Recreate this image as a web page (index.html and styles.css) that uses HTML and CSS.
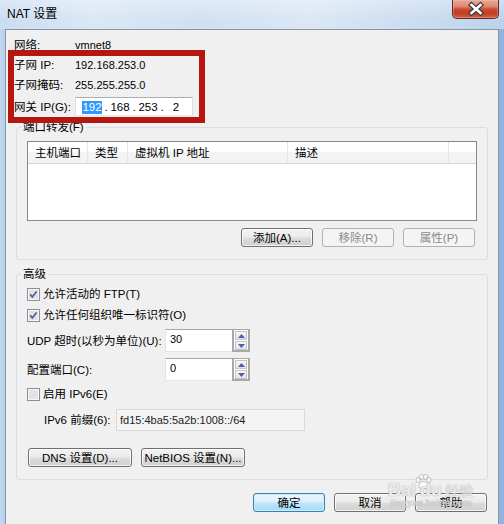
FILE: index.html
```html
<!DOCTYPE html>
<html lang="zh-CN">
<head>
<meta charset="utf-8">
<title>NAT 设置</title>
<link rel="stylesheet" href="styles.css">
</head>
<body>
<div class="window">
  <div class="titlebar">
    <span class="title">NAT 设置</span>
    <div class="close">
      <svg width="47" height="19" viewBox="0 0 47 19">
        <path d="M19.5 6 L28.5 14 M28.5 6 L19.5 14" stroke="#3b3b3b" stroke-width="5" stroke-linecap="square" fill="none"/>
        <path d="M19.5 6 L28.5 14 M28.5 6 L19.5 14" stroke="#ffffff" stroke-width="2.6" stroke-linecap="square" fill="none"/>
      </svg>
    </div>
  </div>
  <div class="client">
    <div class="info">
      <div class="irow"><span class="lbl">网络:</span><span class="val">vmnet8</span></div>
      <div class="irow"><span class="lbl">子网 IP:</span><span class="val">192.168.253.0</span></div>
      <div class="irow"><span class="lbl">子网掩码:</span><span class="val">255.255.255.0</span></div>
      <div class="irow ip-row">
        <span class="lbl">网关 IP(G):</span>
        <div class="ipbox">
          <span class="oct"><span class="sel">192</span></span><span class="dot">.</span><span class="oct">168</span><span class="dot">.</span><span class="oct">253</span><span class="dot">.</span><span class="oct">2</span>
        </div>
      </div>
    </div>

    <fieldset class="group g1">
      <legend>端口转发(F)</legend>
      <div class="gbody">
        <div class="listview">
          <div class="lv-head">
            <div class="col c1">主机端口</div>
            <div class="col c2">类型</div>
            <div class="col c3">虚拟机 IP 地址</div>
            <div class="col c4">描述</div>
            <div class="col c5"></div>
          </div>
        </div>
        <div class="btnrow">
          <button class="btn">添加(A)...</button>
          <button class="btn disabled">移除(R)</button>
          <button class="btn disabled">属性(P)</button>
        </div>
      </div>
    </fieldset>

    <fieldset class="group g2">
      <legend>高级</legend>
      <div class="gbody">
        <div class="cb r-cb1">
          <svg width="13" height="13" viewBox="0 0 13 13"><rect x="0.5" y="0.5" width="12" height="12" fill="#f6f6f6" stroke="#8e8f8f"/><rect x="2" y="2" width="9" height="9" fill="#dfe2e6"/><path d="M3.2 6.4 L5.3 8.9 L9.6 3.4" stroke="#4d5f92" stroke-width="1.7" fill="none"/></svg>
          <span>允许活动的 FTP(T)</span>
        </div>
        <div class="cb r-cb2">
          <svg width="13" height="13" viewBox="0 0 13 13"><rect x="0.5" y="0.5" width="12" height="12" fill="#f6f6f6" stroke="#8e8f8f"/><rect x="2" y="2" width="9" height="9" fill="#dfe2e6"/><path d="M3.2 6.4 L5.3 8.9 L9.6 3.4" stroke="#4d5f92" stroke-width="1.7" fill="none"/></svg>
          <span>允许任何组织唯一标识符(O)</span>
        </div>
        <div class="frow r-udp">
          <span class="flbl">UDP 超时(以秒为单位)(U):</span>
          <div class="spin">
            <span class="spin-val">30</span>
            <div class="spin-btns">
              <div class="spin-btn"><svg width="7" height="4" viewBox="0 0 7 4"><path d="M0 4 L3.5 0 L7 4 Z" fill="#4a5cb8"/></svg></div>
              <div class="spin-btn"><svg width="7" height="4" viewBox="0 0 7 4"><path d="M0 0 L3.5 4 L7 0 Z" fill="#4a5cb8"/></svg></div>
            </div>
          </div>
        </div>
        <div class="frow r-port">
          <span class="flbl">配置端口(C):</span>
          <div class="spin">
            <span class="spin-val">0</span>
            <div class="spin-btns">
              <div class="spin-btn"><svg width="7" height="4" viewBox="0 0 7 4"><path d="M0 4 L3.5 0 L7 4 Z" fill="#4a5cb8"/></svg></div>
              <div class="spin-btn"><svg width="7" height="4" viewBox="0 0 7 4"><path d="M0 0 L3.5 4 L7 0 Z" fill="#4a5cb8"/></svg></div>
            </div>
          </div>
        </div>
        <div class="cb r-ipv6">
          <svg width="13" height="13" viewBox="0 0 13 13"><rect x="0.5" y="0.5" width="12" height="12" fill="#f6f6f6" stroke="#8e8f8f"/><rect x="2" y="2" width="9" height="9" fill="#e1e3e6"/></svg>
          <span>启用 IPv6(E)</span>
        </div>
        <div class="frow r-prefix">
          <span class="plbl">IPv6 前缀(6):</span>
          <div class="pinput">fd15:4ba5:5a2b:1008::/64</div>
        </div>
        <div class="brow">
          <button class="btn wide">DNS 设置(D)...</button>
          <button class="btn wide">NetBIOS 设置(N)...</button>
        </div>
      </div>
    </fieldset>

    <div class="dlg-btns">
      <button class="btn default">确定</button>
      <button class="btn">取消</button>
      <button class="btn">帮助</button>
    </div>

    <div class="annot"></div>
    <div class="watermark">
      <div class="wm-logo"><span class="wm-bai">Bai</span><svg class="wm-paw" width="18" height="16" viewBox="0 0 18 16"><g fill="rgba(255,255,255,0.85)" stroke="#b0b0b0" stroke-width="0.8"><ellipse cx="4" cy="6" rx="2" ry="2.6"/><ellipse cx="7.5" cy="2.8" rx="2" ry="2.5"/><ellipse cx="11.5" cy="2.8" rx="2" ry="2.5"/><ellipse cx="15" cy="6" rx="2" ry="2.6"/><path d="M9.5 7.5 C6 7.5 4.5 11 5 13 C5.6 15 8 14.5 9.5 14.5 C11 14.5 13.4 15 14 13 C14.5 11 13 7.5 9.5 7.5 Z"/></g></svg><span class="wm-du">du</span><span class="wm-jy">经验</span></div>
      <div class="wm-url">jingyan.baidu.com</div>
    </div>
  </div>
</div>
</body>
</html>
```

FILE: styles.css
```css
html, body {
  margin: 0;
  padding: 0;
}
body {
  font-family: "Liberation Sans", "Noto Sans CJK SC", sans-serif;
  font-size: 11.5px;
  line-height: 14px;
  color: #000;
  background: #b8cfea;
}
.window {
  width: 504px;
  height: 524px;
  overflow: hidden;
  display: flex;
  flex-direction: column;
  background: linear-gradient(to right, #c3d8ef 0, #b7cfec 5px, #a9c6e6 60%, #92b4dc 100%);
}
.titlebar {
  height: 29px;
  flex: none;
  display: flex;
  justify-content: space-between;
  align-items: flex-start;
  background:
    linear-gradient(to bottom, rgba(255,255,255,0.35), rgba(255,255,255,0.05) 70%),
    linear-gradient(to right, #c8dbf0 0%, #d8e6f4 18%, #cfdff1 40%, #d9e6f4 62%, #c6d9ef 85%, #b9d0eb 100%);
}
.title {
  margin: 7px 0 0 7px;
  font-size: 12px;
  line-height: 14px;
  color: #000;
}
.close {
  width: 47px;
  height: 19px;
  margin-right: 5px;
  box-sizing: border-box;
  border: 1px solid #5f2a22;
  border-top: none;
  border-radius: 0 0 5px 5px;
  background: linear-gradient(#e6a996 0%, #dc8a73 35%, #c9492f 52%, #c23d22 75%, #d5634a 100%);
  box-shadow: inset 0 0 0 1px rgba(255,200,190,0.35);
}
.close svg {
  display: block;
  margin: -1px 0 0 -1px;
}
.client {
  margin: 0 5px;
  flex: 1;
  position: relative;
  background: #f0f0f0;
  border: 1px solid #8795a6;
  border-bottom: none;
  display: flex;
  flex-direction: column;
}

/* info block */
.info {
  padding: 5px 0 0 8px;
}
.irow {
  display: flex;
  align-items: center;
  height: 20px;
}
.lbl {
  width: 61px;
  flex: none;
}
.val {
  font-size: 11px;
}
.ip-row {
  margin-top: 2px;
  height: 19px;
}
.ipbox {
  box-sizing: border-box;
  width: 118px;
  height: 19px;
  background: #fff;
  border: 1px solid #dbdfe6;
  border-top-color: #abadb3;
  border-bottom-color: #e3e9ef;
  padding-left: 5px;
  display: flex;
  align-items: center;
  font-size: 11.5px;
}
.oct {
  width: 22px;
  text-align: center;
}
.dot {
  width: 6px;
  text-align: center;
}
.sel {
  background: #3399ff;
  color: #fff;
  display: inline-block;
  line-height: 13px;
}

/* groups */
.group {
  margin: 0 10px;
  padding: 0;
  min-width: 0;
  border: 1px solid #d5dfe5;
  border-radius: 3px;
}
.group legend {
  margin-left: 4px;
  padding: 0 2px;
  line-height: 14px;
}
.g1 {
  margin-top: 4px;
}
.g2 {
  margin-top: 7px;
}
.gbody {
  padding: 7px 10px 12px 10px;
}
.g2 .gbody {
  padding: 0 10px 12px 10px;
}
.listview {
  box-sizing: border-box;
  height: 80px;
  background: #fff;
  border: 1px solid #828790;
}
.lv-head {
  display: flex;
  height: 22px;
  box-sizing: border-box;
  border-bottom: 1px solid #d5d5d5;
  background: linear-gradient(#ffffff 0%, #ffffff 45%, #f3f4f6 46%, #f1f2f4 100%);
}
.col {
  box-sizing: border-box;
  padding-left: 7px;
  display: flex;
  align-items: center;
  border-right: 1px solid #e3e6ea;
}
.c1 { width: 60px; }
.c2 { width: 40px; }
.c3 { width: 160px; }
.c4 { width: 161px; }
.c5 { flex: 1; border-right: none; }
.btnrow {
  margin-top: 7px;
  padding-right: 2px;
  display: flex;
  justify-content: flex-end;
  gap: 9px;
}

/* buttons */
.btn {
  box-sizing: border-box;
  width: 72px;
  height: 19px;
  margin: 0;
  padding: 0;
  font: inherit;
  line-height: 14px;
  color: #000;
  border: 1px solid #707070;
  border-radius: 3px;
  background: linear-gradient(#f2f2f2 0%, #ebebeb 48%, #dddddd 52%, #cfcfcf 100%);
  box-shadow: inset 0 0 0 1px rgba(255,255,255,0.75);
  display: flex;
  align-items: center;
  justify-content: center;
}
.btn.disabled {
  border-color: #adb2b5;
  background: #f4f4f4;
  color: #8a8a8a;
  box-shadow: none;
}
.btn.default {
  border-color: #3c7fb1;
  background: linear-gradient(#eaf6fd 0%, #d9f0fc 48%, #bee6fd 52%, #a7d9f5 100%);
  box-shadow: inset 0 0 0 1px #cbeefc;
}
.btn.wide {
  width: 104px;
}

/* advanced group rows */
.cb {
  display: flex;
  align-items: center;
  gap: 3px;
  height: 14px;
}
.cb svg {
  display: block;
  flex: none;
}
.r-cb1 { margin-top: 6px; }
.r-cb2 { margin-top: 7px; }
.frow {
  display: flex;
  align-items: center;
}
.r-udp { margin-top: 7px; height: 23px; }
.r-port { margin-top: 6px; height: 23px; }
.r-ipv6 { margin-top: 6px; }
.r-prefix { margin-top: 8px; height: 22px; padding-left: 17px; }
.flbl {
  width: 138px;
  flex: none;
}
.spin {
  box-sizing: border-box;
  width: 85px;
  height: 23px;
  display: flex;
  background: #fff;
  border: 1px solid #e2e6ec;
  border-top-color: #a6a6a6;
  border-right: none;
}
.spin-val {
  flex: 1;
  padding: 2px 0 0 4px;
  font-size: 11px;
}
.spin-btns {
  box-sizing: border-box;
  width: 18px;
  margin: -1px 0 -1px 0;
  border: 2px solid #a8a8a8;
  border-top-width: 1px;
  padding: 1px 1px 0 1px;
  display: flex;
  flex-direction: column;
  gap: 1px;
  background: #fff;
}
.spin-btn {
  flex: 1;
  border: 1px solid #c4c4c4;
  background: linear-gradient(#f7f7f7, #e3e3e3);
  display: flex;
  align-items: center;
  justify-content: center;
}
.spin-btn svg {
  display: block;
}
.plbl {
  width: 72px;
  flex: none;
}
.pinput {
  box-sizing: border-box;
  width: 189px;
  height: 22px;
  border: 1px solid #d9d9d9;
  background: #f4f4f4;
  padding: 3px 0 0 3px;
  font-size: 11px;
  color: #222;
}
.brow {
  margin-top: 17px;
  margin-left: 1px;
  display: flex;
  gap: 9px;
}

/* dialog buttons */
.dlg-btns {
  margin-top: 13px;
  padding-right: 11px;
  display: flex;
  justify-content: flex-end;
  gap: 9px;
}

/* annotation overlay (red highlight box) */
.annot {
  position: absolute;
  left: 2px;
  top: 20px;
  width: 197px;
  height: 73px;
  box-sizing: border-box;
  border: 6px solid #b5170e;
}

/* watermark overlay */
.watermark {
  position: absolute;
  left: 382px;
  top: 444px;
  color: rgba(255,255,255,0.8);
  text-shadow: 0 0 1px #a8a8a8, 0 0 1px #a8a8a8;
  pointer-events: none;
}
.wm-logo {
  display: block;
  white-space: nowrap;
  font-family: "Liberation Sans", sans-serif;
  font-weight: bold;
  font-size: 18px;
  line-height: 20px;
  height: 20px;
}
.wm-paw {
  display: inline-block;
  vertical-align: 6px;
  margin: 0 -12px 0 -2px;
}
.wm-du {
  margin-left: 0;
}
.wm-jy {
  margin-left: 3px;
  font-family: "Noto Sans CJK SC", sans-serif;
  font-size: 14px;
  font-weight: normal;
}
.wm-url {
  font-family: "Liberation Serif", serif;
  font-size: 11px;
  line-height: 12px;
  height: 12px;
  margin-top: 2px;
  padding-left: 2px;
  color: rgba(255,255,255,0.6);
}
```
